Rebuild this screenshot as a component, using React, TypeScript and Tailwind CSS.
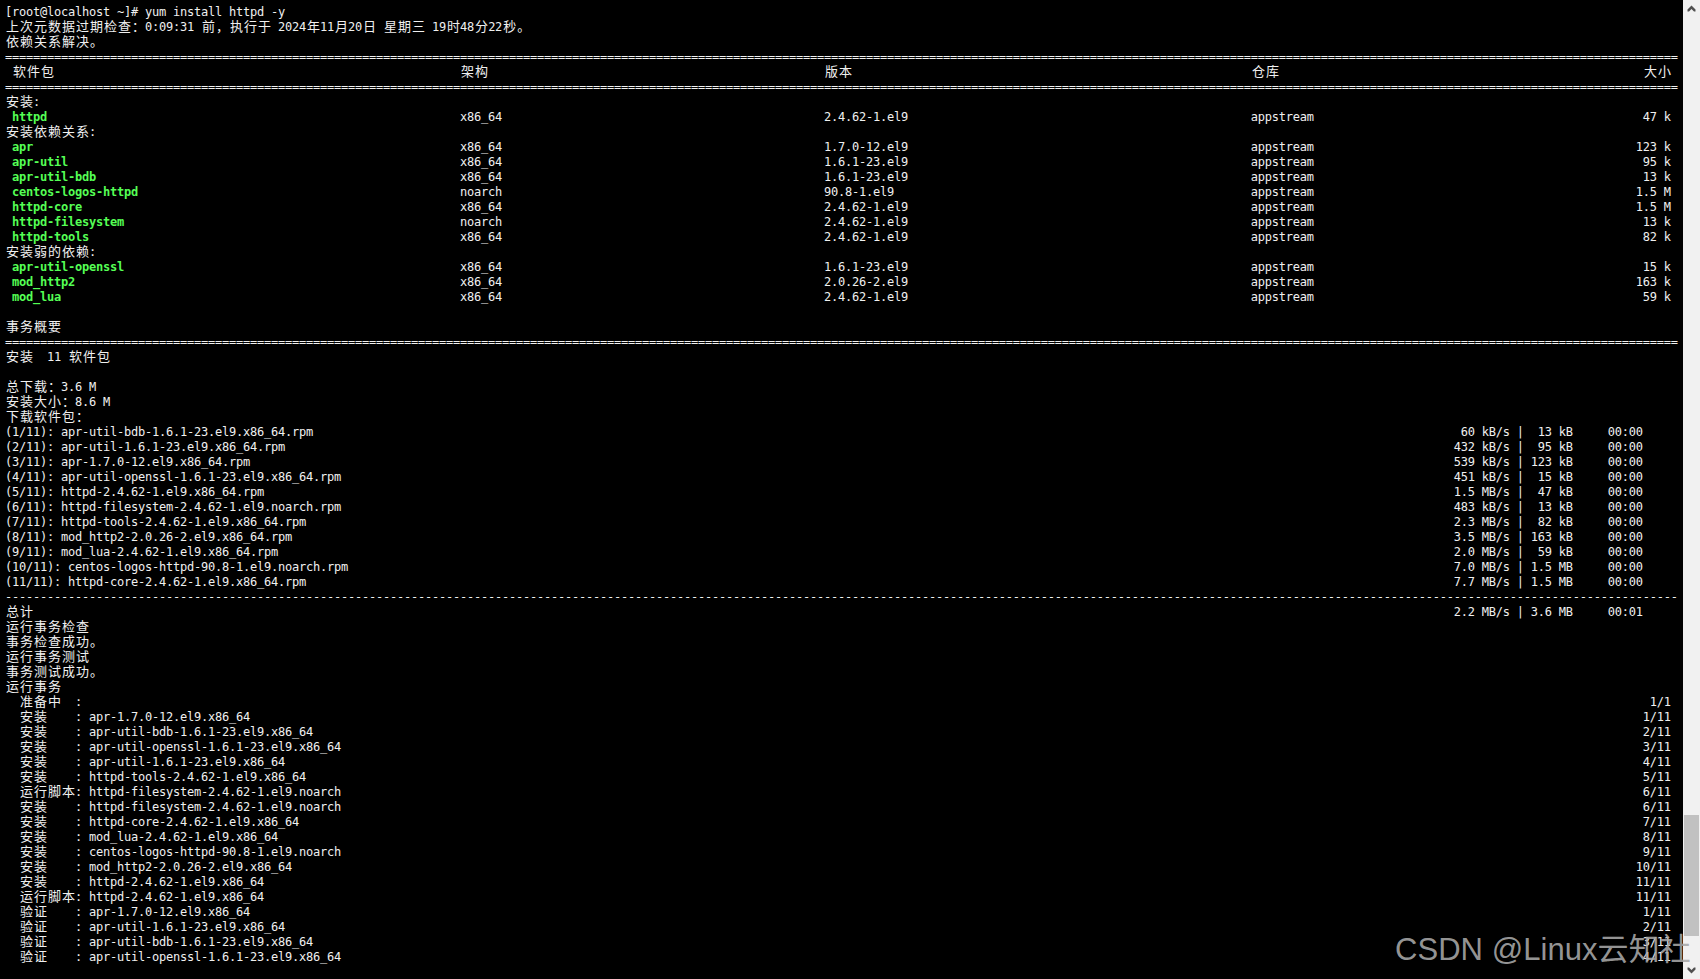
import React from "react";

const isWide = (ch: string) => ch.charCodeAt(0) > 0x2e7f;
const displayWidth = (s: string) => [...s].reduce((n, ch) => n + (isWide(ch) ? 2 : 1), 0);

// pad a string out to a terminal column
const to = (s: string, col: number) => s + " ".repeat(Math.max(col - displayWidth(s), 0));
const right = (s: string, end: number) => " ".repeat(Math.max(end - displayWidth(s), 0)) + s;

type Seg = { text: string; green?: boolean };
type Line = Seg[];

const plain = (text = ""): Line => [{ text }];

const pkgRow = (name: string, arch: string, ver: string, size: string): Line => [
  { text: " " },
  { text: name, green: true },
  {
    text:
      " ".repeat(64 - name.length) +
      to(arch, 52) +
      to(ver, 61) +
      to("appstream", 60 - size.length) +
      size,
  },
];

const dlRow = (file: string, speed: string, size: string, time = "00:00"): Line =>
  plain(to(file, 207) + right(speed, 8) + " | " + right(size, 6) + "     " + time);

const txRow = (action: string, pkg: string, count: string): Line => {
  const left = "  " + to(action, 8) + ": " + pkg;
  return plain(to(left, 238 - count.length) + count);
};

const rule = (c: string) => plain(c.repeat(239));

const lines: Line[] = [
  plain("[root@localhost ~]# yum install httpd -y"),
  plain("上次元数据过期检查：0:09:31 前，执行于 2024年11月20日 星期三 19时48分22秒。"),
  plain("依赖关系解决。"),
  rule("="),
  plain(to(" 软件包", 65) + to("架构", 52) + to("版本", 61) + to("仓库", 56) + "大小"),
  rule("="),
  plain("安装:"),
  pkgRow("httpd", "x86_64", "2.4.62-1.el9", "47 k"),
  plain("安装依赖关系:"),
  pkgRow("apr", "x86_64", "1.7.0-12.el9", "123 k"),
  pkgRow("apr-util", "x86_64", "1.6.1-23.el9", "95 k"),
  pkgRow("apr-util-bdb", "x86_64", "1.6.1-23.el9", "13 k"),
  pkgRow("centos-logos-httpd", "noarch", "90.8-1.el9", "1.5 M"),
  pkgRow("httpd-core", "x86_64", "2.4.62-1.el9", "1.5 M"),
  pkgRow("httpd-filesystem", "noarch", "2.4.62-1.el9", "13 k"),
  pkgRow("httpd-tools", "x86_64", "2.4.62-1.el9", "82 k"),
  plain("安装弱的依赖:"),
  pkgRow("apr-util-openssl", "x86_64", "1.6.1-23.el9", "15 k"),
  pkgRow("mod_http2", "x86_64", "2.0.26-2.el9", "163 k"),
  pkgRow("mod_lua", "x86_64", "2.4.62-1.el9", "59 k"),
  plain(),
  plain("事务概要"),
  rule("="),
  plain("安装  11 软件包"),
  plain(),
  plain("总下载：3.6 M"),
  plain("安装大小：8.6 M"),
  plain("下载软件包："),
  dlRow("(1/11): apr-util-bdb-1.6.1-23.el9.x86_64.rpm", "60 kB/s", "13 kB"),
  dlRow("(2/11): apr-util-1.6.1-23.el9.x86_64.rpm", "432 kB/s", "95 kB"),
  dlRow("(3/11): apr-1.7.0-12.el9.x86_64.rpm", "539 kB/s", "123 kB"),
  dlRow("(4/11): apr-util-openssl-1.6.1-23.el9.x86_64.rpm", "451 kB/s", "15 kB"),
  dlRow("(5/11): httpd-2.4.62-1.el9.x86_64.rpm", "1.5 MB/s", "47 kB"),
  dlRow("(6/11): httpd-filesystem-2.4.62-1.el9.noarch.rpm", "483 kB/s", "13 kB"),
  dlRow("(7/11): httpd-tools-2.4.62-1.el9.x86_64.rpm", "2.3 MB/s", "82 kB"),
  dlRow("(8/11): mod_http2-2.0.26-2.el9.x86_64.rpm", "3.5 MB/s", "163 kB"),
  dlRow("(9/11): mod_lua-2.4.62-1.el9.x86_64.rpm", "2.0 MB/s", "59 kB"),
  dlRow("(10/11): centos-logos-httpd-90.8-1.el9.noarch.rpm", "7.0 MB/s", "1.5 MB"),
  dlRow("(11/11): httpd-core-2.4.62-1.el9.x86_64.rpm", "7.7 MB/s", "1.5 MB"),
  rule("-"),
  dlRow("总计", "2.2 MB/s", "3.6 MB", "00:01"),
  plain("运行事务检查"),
  plain("事务检查成功。"),
  plain("运行事务测试"),
  plain("事务测试成功。"),
  plain("运行事务"),
  txRow("准备中", "", "1/1"),
  txRow("安装", "apr-1.7.0-12.el9.x86_64", "1/11"),
  txRow("安装", "apr-util-bdb-1.6.1-23.el9.x86_64", "2/11"),
  txRow("安装", "apr-util-openssl-1.6.1-23.el9.x86_64", "3/11"),
  txRow("安装", "apr-util-1.6.1-23.el9.x86_64", "4/11"),
  txRow("安装", "httpd-tools-2.4.62-1.el9.x86_64", "5/11"),
  txRow("运行脚本", "httpd-filesystem-2.4.62-1.el9.noarch", "6/11"),
  txRow("安装", "httpd-filesystem-2.4.62-1.el9.noarch", "6/11"),
  txRow("安装", "httpd-core-2.4.62-1.el9.x86_64", "7/11"),
  txRow("安装", "mod_lua-2.4.62-1.el9.x86_64", "8/11"),
  txRow("安装", "centos-logos-httpd-90.8-1.el9.noarch", "9/11"),
  txRow("安装", "mod_http2-2.0.26-2.el9.x86_64", "10/11"),
  txRow("安装", "httpd-2.4.62-1.el9.x86_64", "11/11"),
  txRow("运行脚本", "httpd-2.4.62-1.el9.x86_64", "11/11"),
  txRow("验证", "apr-1.7.0-12.el9.x86_64", "1/11"),
  txRow("验证", "apr-util-1.6.1-23.el9.x86_64", "2/11"),
  txRow("验证", "apr-util-bdb-1.6.1-23.el9.x86_64", "3/11"),
  txRow("验证", "apr-util-openssl-1.6.1-23.el9.x86_64", "4/11"),
];

// CJK glyphs take two cells (14px), latin ones take one (7px)
function Runs({ text, green }: Seg) {
  const runs = text.match(/[\u2e80-\uffff]+|[^\u2e80-\uffff]+/g) ?? [];
  return (
    <>
      {runs.map((run, i) =>
        isWide(run[0]) ? (
          <span key={i} className="pl-px -mr-px text-[13px] leading-[0] tracking-[1px] font-['Noto_Sans_CJK_SC',sans-serif]">
            {run}
          </span>
        ) : (
          <span key={i} className={green ? "font-bold text-[#55ff55]" : ""}>
            {run}
          </span>
        )
      )}
    </>
  );
}

function Chevron({ down }: { down?: boolean }) {
  return (
    <div className="h-[17px] flex items-center justify-center">
      <svg width="9" height="7" viewBox="0 0 9 7" className={down ? "rotate-180" : ""}>
        <path d="M4.5 0.5L8.5 4.5V6.5H7L4.5 4L2 6.5H0.5V4.5Z" fill="#505050" />
      </svg>
    </div>
  );
}

export default function App() {
  return (
    <div className="relative h-[979px] w-full overflow-hidden bg-black flex">
      <div className="flex-1 pt-[5px] pl-[5px] text-[12px] tracking-[-0.2255px] leading-[15px] text-[#f0f0f0] font-['DejaVu_Sans_Mono',monospace] whitespace-pre">
        {lines.map((line, i) => (
          <div key={i} className="h-[15px] leading-[15px]">
            {line.map((seg, j) => (
              <Runs key={j} {...seg} />
            ))}
          </div>
        ))}
      </div>

      <div className="w-[17px] shrink-0 bg-[#f1f1f1] flex flex-col">
        <Chevron />
        <div className="flex-1" />
        <div className="mx-px h-[121px] bg-[#c1c1c1]" />
        <div className="h-[26px]" />
        <Chevron down />
      </div>

      <div className="absolute left-[1395px] top-[931px] text-[31px] leading-[38px] tracking-[0.05px] whitespace-nowrap text-[#a8a8a8]/90 font-['Liberation_Sans','Noto_Sans_CJK_SC',sans-serif]">
        CSDN @Linux云知社
      </div>
    </div>
  );
}
